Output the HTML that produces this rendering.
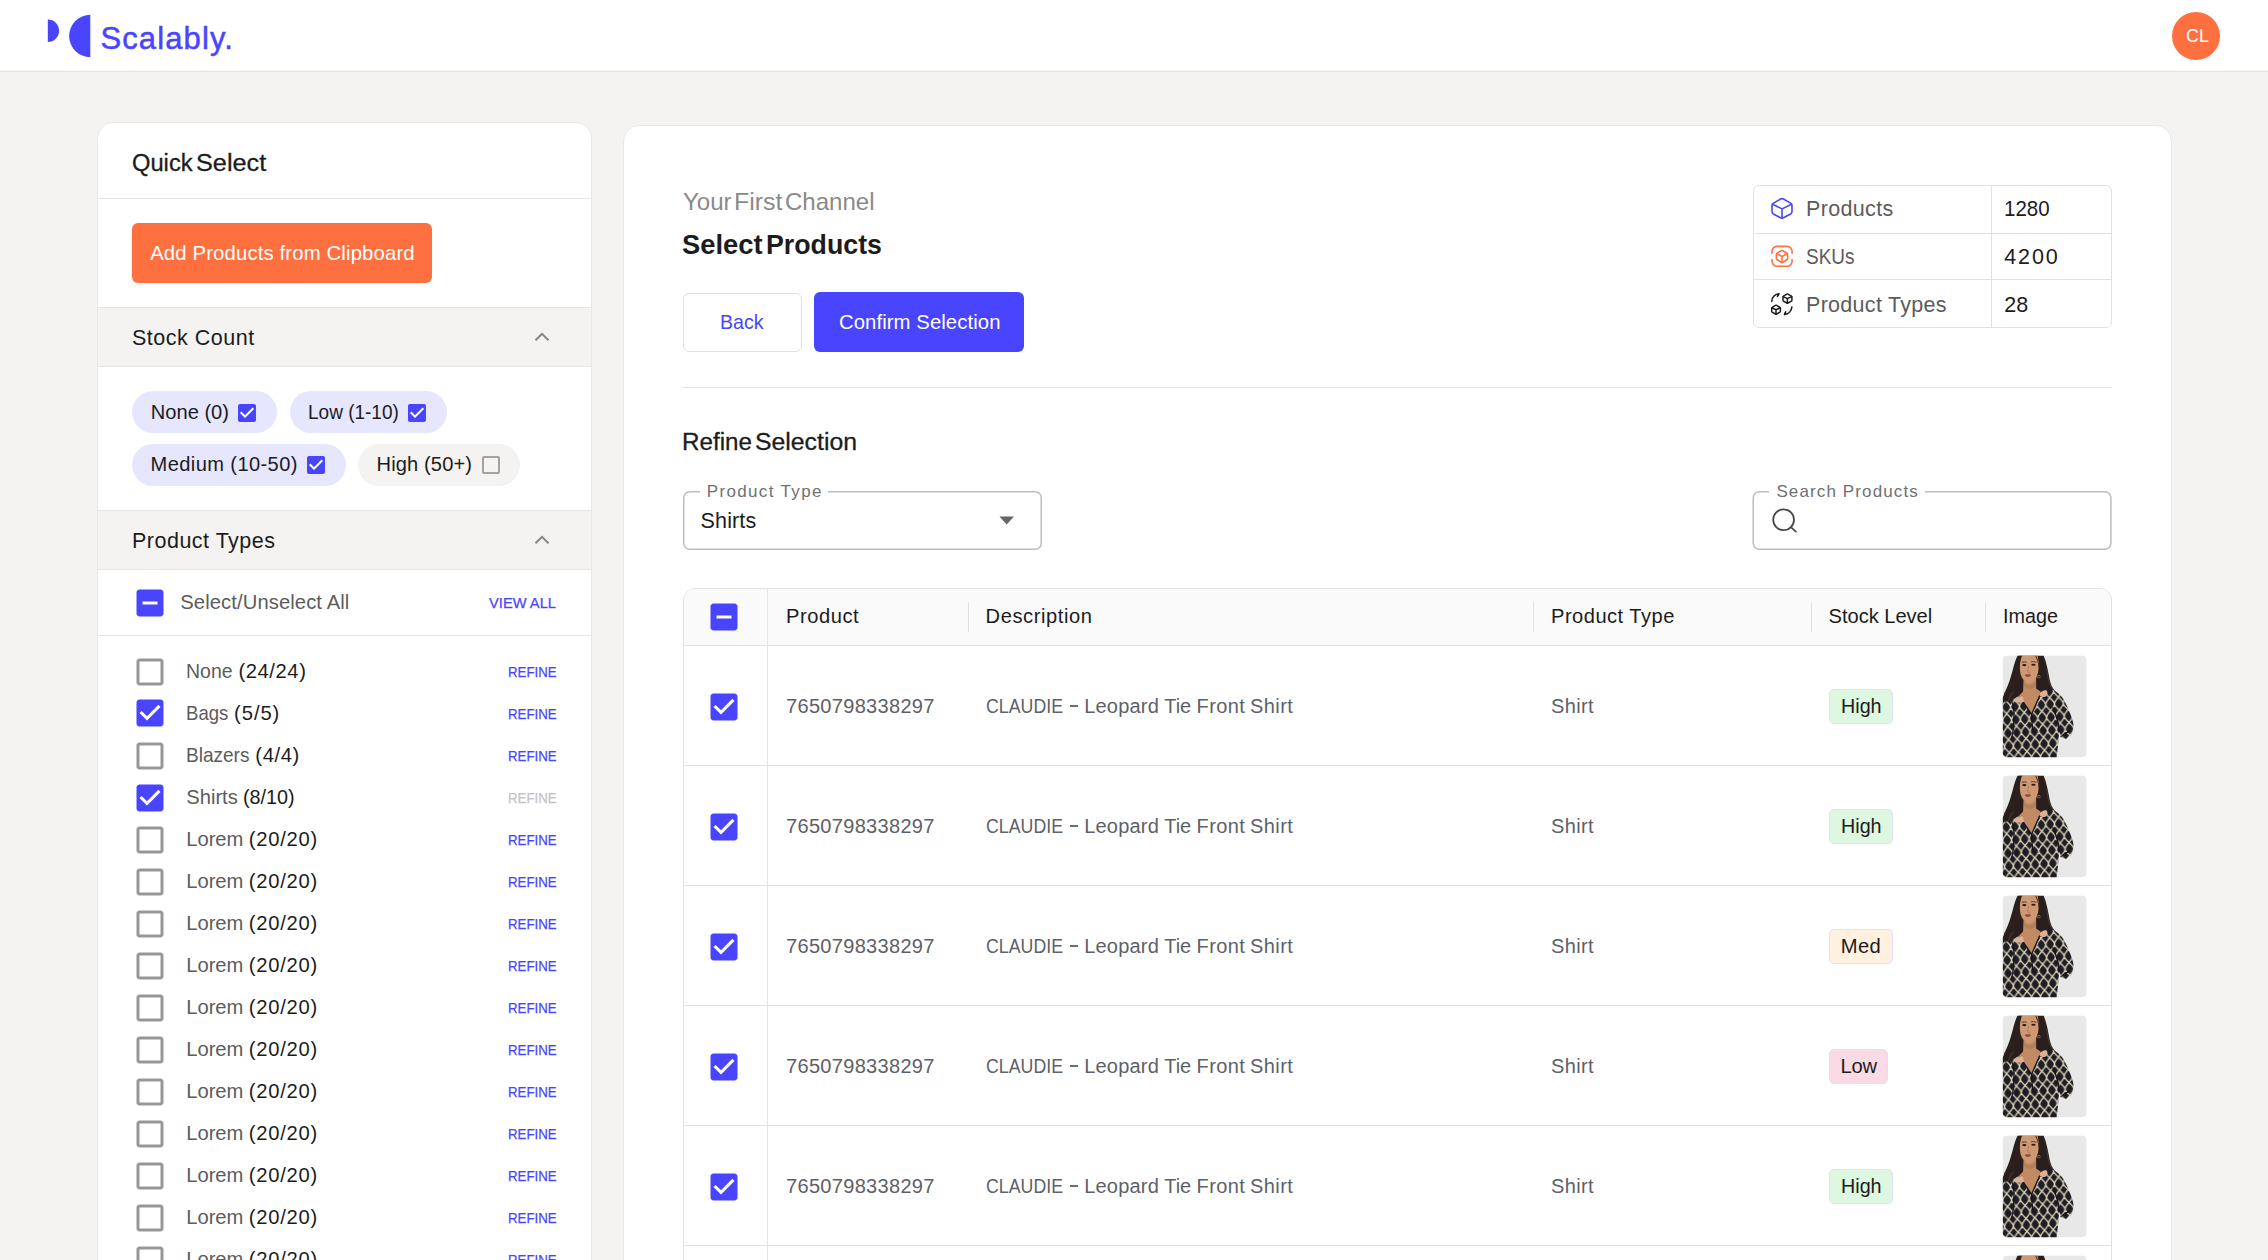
<!DOCTYPE html>
<html><head><meta charset="utf-8"><title>Scalably - Select Products</title>
<style>
html,body{margin:0;padding:0}
body{width:2268px;height:1260px;overflow:hidden;position:relative;background:#F4F3F1;font-family:"Liberation Sans",sans-serif}
.b{position:absolute;box-sizing:border-box;display:block}
.t{position:absolute;white-space:pre;margin:0;padding:0}

</style></head>
<body>
<svg width="0" height="0" style="position:absolute">
<defs>
<pattern id="lat" width="8.8" height="13" patternUnits="userSpaceOnUse" patternTransform="rotate(-4)">
<rect width="8.8" height="13" fill="#1e1d25"/>
<path d="M4.4 0 C4.4 2.6 6.8 4 8.8 6.5 C6.8 9 4.4 10.4 4.4 13 C4.4 10.4 2 9 0 6.5 C2 4 4.4 2.6 4.4 0 Z" fill="none" stroke="#dbd3b6" stroke-width="1.25"/>
</pattern>
<clipPath id="pc"><rect width="84" height="102" rx="4.5"/></clipPath>
<symbol id="prod" viewBox="0 0 84 102">
<g clip-path="url(#pc)">
<rect width="84" height="102" fill="#E8E8E8"/>
<!-- hair mass -->
<path d="M15 0 L41 0 C44 7 45.5 16 47 24 C48.5 30 50 33 53.5 36.5 L47 41 L22 47 L9 47 C6 47 3 50 0 53 L0 42 C1.5 40 1 38 3 35 C6 29 8 22 10 15 C11.5 9 13 4 15 0 Z" fill="#2a1f1c"/>
<path d="M4 36 C6 40 3 44 1 47 M9 24 C8 32 10 38 6 45 M13 12 C11 22 13 30 9 40 M44 14 C45 22 46 28 50 34" stroke="#4e3b32" stroke-width="0.9" fill="none"/>
<!-- neck + chest -->
<path d="M21 22 L20.5 36 L16 40.5 L29 59 L39 37 L33.5 33 L33.5 22 Z" fill="#c28a64"/>
<path d="M21 27 C24 31 30 31 33.5 26 L33.5 31 C30 34 25 34 21 31 Z" fill="#a8744f" opacity="0.55"/>
<!-- face -->
<path d="M18.5 0 C17.5 5 17 10 17.3 15 C17.8 20 20 24.5 24 27.3 C26 28.4 28.4 28.2 30.5 26.5 C33.5 23.8 35.5 19 36 13 C36.2 8 35.8 4 35 0 Z" fill="#cd9872"/>
<path d="M26 11 C25.6 14 25.2 15.5 25 16.6 C25.8 17.3 27 17.3 27.8 16.6" stroke="#a87452" stroke-width="0.7" fill="none"/>
<path d="M22 19.5 C24 18.2 26.6 18.2 28.8 19.5 C26.8 22.4 23.6 22.3 22 19.5 Z" fill="#96524a"/>
<ellipse cx="21.7" cy="9.7" rx="2.1" ry="1.05" fill="#2a1c18"/><ellipse cx="30.8" cy="9.4" rx="2.2" ry="1.05" fill="#2a1c18"/>
<path d="M17.4 10 C17.6 17 19.5 23 24 27.3 C21 26.5 18.6 22 17.6 16 Z" fill="#a9734f" opacity="0.6"/>
<path d="M19.2 7.2 C20.6 6.3 22.6 6.3 24 6.9 M28.4 6.6 C30 5.9 32 6 33.6 7" stroke="#3b2b25" stroke-width="0.8" fill="none"/>
<circle cx="36.2" cy="21.2" r="1.3" fill="none" stroke="#b08a4e" stroke-width="0.7"/>
<!-- hair front strands -->
<path d="M19.5 0 C17 6 16.2 13 17 20 C17.4 24 16 28 13 32 C10 36.5 5 41 2 46 L0 44 C4 36 8 28 10 20 C11.5 12 13 5 16 0 Z" fill="#2a1f1c"/>
<path d="M33.5 0 C36 5 37 12 36.8 19 C36.8 25 39 30 44 34 C46 35.5 48 36 50 37 L46 40 C41 37 37.5 32 36.6 26 C37.4 18 36.6 8 32.5 0 Z" fill="#2a1f1c"/>
<!-- shirt -->
<path d="M0 47 L9 45 L16.5 40.5 L29 59 L38.5 37 L46 33 C52 34.5 57 38 61 44 C65 51 68.5 59 70.5 67 C71.5 72 70.5 77 68 80 L63.5 83.5 L58 81.5 L56.5 76 C56 85 55 94 54 102 L0 102 Z" fill="url(#lat)"/>
<!-- collar + folds -->
<path d="M16.5 40.5 L29 59 L38.5 37 M29 59 L30 76 M56.5 76 C56 68 54 60 50 52 M10 47 C12 56 12 70 9 84" stroke="#121117" stroke-width="1.3" fill="none"/>
<path d="M58 81.5 C61 79 64 76.5 68 75.5" stroke="#121117" stroke-width="1.1" fill="none"/>
<!-- hands at collar -->
<path d="M11.5 44.5 C13 41.5 17 40 20.5 41.5 L21.5 46 C18.5 48 14 48 11.5 44.5 Z" fill="#dcae92"/>
<path d="M36.5 39.5 C37.5 36.5 41 34.2 44.5 35.5 L45 39 C43 42 39.5 42.6 36.5 39.5 Z" fill="#dcae92"/>
</g>
</symbol>
</defs></svg>

<div class='b' style='left:0px;top:0px;width:2268px;height:70px;background:#fff'></div>
<div class='b' style='left:0px;top:70px;width:2268px;height:1px;background:#F6F6F6'></div>
<div class='b' style='left:0px;top:71px;width:2268px;height:1px;background:#E6E6E6'></div>
<svg class='b' style='left:40px;top:8px' width='60' height='56' viewBox='40 8 60 56'>
<path d='M47.8 19.5 A11.3 11.3 0 0 1 47.8 42.1 Z' fill='#4945FF'/>
<path d='M90.3 14.8 A21.2 21.2 0 0 0 90.3 57.2 Z' fill='#4945FF'/></svg>
<div class='t' style='left:100.4px;top:21px;font-size:31px;line-height:35px;color:#4945FF;font-weight:400;letter-spacing:1.137px;-webkit-text-stroke:0.5px #4945FF;'>Scalably.</div>
<div class='b' style='left:2172px;top:12px;width:48px;height:48px;background:#FF7040;border-radius:50%'></div>
<div class='t' style='left:2185.6px;top:25px;font-size:19px;line-height:21px;color:#fff;font-weight:400;transform:scaleX(0.9384);transform-origin:0 0;'>CL</div>
<div class='b' style='left:97px;top:122px;width:495px;height:1200px;background:#fff;border:1px solid #E8E8E8;border-radius:16px 16px 0 0'></div>
<div class='t' style='left:131.6px;top:149px;font-size:24.2px;line-height:27px;color:#1C1C1C;font-weight:400;transform:scaleX(0.9801);transform-origin:0 0;-webkit-text-stroke:0.3px #1C1C1C;'>Quick</div>
<div class='t' style='left:196.2px;top:149px;font-size:24.2px;line-height:27px;color:#1C1C1C;font-weight:400;transform:scaleX(1.0441);transform-origin:0 0;-webkit-text-stroke:0.3px #1C1C1C;'>Select</div>
<div class='b' style='left:98px;top:198px;width:493px;height:1px;background:#E6E6E6'></div>
<div class='b' style='left:132px;top:223px;width:300px;height:60px;background:#FF7040;border-radius:6px'></div>
<div class='t' style='left:150.2px;top:242px;font-size:20.3px;line-height:22px;color:#fff;font-weight:400;letter-spacing:0.154px;'>Add Products from Clipboard</div>
<div class='b' style='left:98px;top:307px;width:493px;height:60px;background:#F4F3F1;border-top:1px solid #E6E6E6;border-bottom:1px solid #E6E6E6'></div>
<div class='t' style='left:132.0px;top:326px;font-size:21.5px;line-height:24px;color:#1C1C1C;font-weight:400;letter-spacing:0.508px;'>Stock Count</div>
<svg class='b' style='left:532.6px;top:331px' width='18' height='12' viewBox='0 0 18 12'><path d='M2.5 9.3 L9 2.8 L15.5 9.3' fill='none' stroke='#858585' stroke-width='2'/></svg>
<div class='b' style='left:132px;top:391px;width:145.2px;height:42px;background:#E6E6FF;border-radius:21px'></div><div class='t' style='left:150.8px;top:401px;font-size:20.1px;line-height:22px;color:#1C1C1C;font-weight:400;letter-spacing:0.002px;'>None (0)</div><svg class='b' style='left:235.40px;top:400.50px' width='24.0' height='24.0' viewBox='0 0 24 24'><rect x='4' y='4' width='16' height='16' fill='#fff'/><path d='M19 3H5c-1.11 0-2 .9-2 2v14c0 1.1.89 2 2 2h14c1.11 0 2-.9 2-2V5c0-1.1-.89-2-2-2zm-9 14l-5-5 1.41-1.41L10 14.17l7.59-7.59L19 8l-9 9z' fill='#4945FF'/></svg>
<div class='b' style='left:289.5px;top:391px;width:157.2px;height:42px;background:#E6E6FF;border-radius:21px'></div><div class='t' style='left:307.6px;top:401px;font-size:20.1px;line-height:22px;color:#1C1C1C;font-weight:400;transform:scaleX(0.9454);transform-origin:0 0;'>Low (1-10)</div><svg class='b' style='left:405.00px;top:400.50px' width='24.0' height='24.0' viewBox='0 0 24 24'><rect x='4' y='4' width='16' height='16' fill='#fff'/><path d='M19 3H5c-1.11 0-2 .9-2 2v14c0 1.1.89 2 2 2h14c1.11 0 2-.9 2-2V5c0-1.1-.89-2-2-2zm-9 14l-5-5 1.41-1.41L10 14.17l7.59-7.59L19 8l-9 9z' fill='#4945FF'/></svg>
<div class='b' style='left:132px;top:444px;width:214.2px;height:42px;background:#E6E6FF;border-radius:21px'></div><div class='t' style='left:150.6px;top:453px;font-size:20.1px;line-height:22px;color:#1C1C1C;font-weight:400;letter-spacing:0.382px;'>Medium (10-50)</div><svg class='b' style='left:304.30px;top:453.20px' width='24.0' height='24.0' viewBox='0 0 24 24'><rect x='4' y='4' width='16' height='16' fill='#fff'/><path d='M19 3H5c-1.11 0-2 .9-2 2v14c0 1.1.89 2 2 2h14c1.11 0 2-.9 2-2V5c0-1.1-.89-2-2-2zm-9 14l-5-5 1.41-1.41L10 14.17l7.59-7.59L19 8l-9 9z' fill='#4945FF'/></svg>
<div class='b' style='left:358px;top:444px;width:162.4px;height:42px;background:#F4F3F1;border-radius:21px'></div><div class='t' style='left:376.6px;top:453px;font-size:20.1px;line-height:22px;color:#1C1C1C;font-weight:400;letter-spacing:0.112px;'>High (50+)</div><svg class='b' style='left:478.60px;top:453.20px' width='24.0' height='24.0' viewBox='0 0 24 24'><path d='M19 5v14H5V5h14m0-2H5c-1.1 0-2 .9-2 2v14c0 1.1.9 2 2 2h14c1.1 0 2-.9 2-2V5c0-1.1-.9-2-2-2z' fill='#A2A2A2'/></svg>
<div class='b' style='left:98px;top:510px;width:493px;height:60px;background:#F4F3F1;border-top:1px solid #E6E6E6;border-bottom:1px solid #E6E6E6'></div>
<div class='t' style='left:132.0px;top:529px;font-size:21.5px;line-height:24px;color:#1C1C1C;font-weight:400;letter-spacing:0.496px;'>Product Types</div>
<svg class='b' style='left:532.6px;top:533.5px' width='18' height='12' viewBox='0 0 18 12'><path d='M2.5 9.3 L9 2.8 L15.5 9.3' fill='none' stroke='#858585' stroke-width='2'/></svg>
<svg class='b' style='left:131.80px;top:584.80px' width='36.0' height='36.0' viewBox='0 0 24 24'><rect x='4' y='4' width='16' height='16' fill='#fff'/><path d='M19 3H5c-1.1 0-2 .9-2 2v14c0 1.1.9 2 2 2h14c1.1 0 2-.9 2-2V5c0-1.1-.9-2-2-2zm-2 10H7v-2h10v2z' fill='#4945FF'/></svg>
<div class='t' style='left:180.3px;top:591px;font-size:20.2px;line-height:22px;color:#5C5C5C;font-weight:400;letter-spacing:0.101px;'>Select/Unselect All</div>
<div class='t' style='left:489.4px;top:594px;font-size:15.4px;line-height:17px;color:#4945FF;font-weight:400;transform:scaleX(0.9550);transform-origin:0 0;-webkit-text-stroke:0.25px currentColor;'>VIEW ALL</div>
<div class='b' style='left:98px;top:635px;width:493px;height:1px;background:#E6E6E6'></div>
<svg class='b' style='left:131.80px;top:653.90px' width='36.0' height='36.0' viewBox='0 0 24 24'><path d='M19 5v14H5V5h14m0-2H5c-1.1 0-2 .9-2 2v14c0 1.1.9 2 2 2h14c1.1 0 2-.9 2-2V5c0-1.1-.9-2-2-2z' fill='#979797'/></svg>
<div class='t' style='left:186.3px;top:660px;font-size:20.2px;line-height:22px;color:#5C5C5C;font-weight:400;transform:scaleX(0.9655);transform-origin:0 0;'>None</div>
<div class='t' style='left:238.4px;top:660px;font-size:20.2px;line-height:22px;color:#1C1C1C;font-weight:400;letter-spacing:0.589px;'>(24/24)</div>
<div class='t' style='left:507.8px;top:663px;font-size:15.4px;line-height:17px;color:#4945FF;font-weight:400;transform:scaleX(0.8611);transform-origin:0 0;-webkit-text-stroke:0.25px currentColor;'>REFINE</div>
<svg class='b' style='left:131.80px;top:694.50px' width='36.0' height='36.0' viewBox='0 0 24 24'><rect x='4' y='4' width='16' height='16' fill='#fff'/><path d='M19 3H5c-1.11 0-2 .9-2 2v14c0 1.1.89 2 2 2h14c1.11 0 2-.9 2-2V5c0-1.1-.89-2-2-2zm-9 14l-5-5 1.41-1.41L10 14.17l7.59-7.59L19 8l-9 9z' fill='#4945FF'/></svg>
<div class='t' style='left:186.3px;top:702px;font-size:20.2px;line-height:22px;color:#5C5C5C;font-weight:400;transform:scaleX(0.9193);transform-origin:0 0;'>Bags</div>
<div class='t' style='left:234.1px;top:702px;font-size:20.2px;line-height:22px;color:#1C1C1C;font-weight:400;letter-spacing:0.921px;'>(5/5)</div>
<div class='t' style='left:507.8px;top:705px;font-size:15.4px;line-height:17px;color:#4945FF;font-weight:400;transform:scaleX(0.8611);transform-origin:0 0;-webkit-text-stroke:0.25px currentColor;'>REFINE</div>
<svg class='b' style='left:131.80px;top:737.90px' width='36.0' height='36.0' viewBox='0 0 24 24'><path d='M19 5v14H5V5h14m0-2H5c-1.1 0-2 .9-2 2v14c0 1.1.9 2 2 2h14c1.1 0 2-.9 2-2V5c0-1.1-.9-2-2-2z' fill='#979797'/></svg>
<div class='t' style='left:186.3px;top:744px;font-size:20.2px;line-height:22px;color:#5C5C5C;font-weight:400;transform:scaleX(0.9431);transform-origin:0 0;'>Blazers</div>
<div class='t' style='left:255.3px;top:744px;font-size:20.2px;line-height:22px;color:#1C1C1C;font-weight:400;letter-spacing:0.621px;'>(4/4)</div>
<div class='t' style='left:507.8px;top:747px;font-size:15.4px;line-height:17px;color:#4945FF;font-weight:400;transform:scaleX(0.8611);transform-origin:0 0;-webkit-text-stroke:0.25px currentColor;'>REFINE</div>
<svg class='b' style='left:131.80px;top:779.90px' width='36.0' height='36.0' viewBox='0 0 24 24'><rect x='4' y='4' width='16' height='16' fill='#fff'/><path d='M19 3H5c-1.11 0-2 .9-2 2v14c0 1.1.89 2 2 2h14c1.11 0 2-.9 2-2V5c0-1.1-.89-2-2-2zm-9 14l-5-5 1.41-1.41L10 14.17l7.59-7.59L19 8l-9 9z' fill='#4945FF'/></svg>
<div class='t' style='left:186.3px;top:786px;font-size:20.2px;line-height:22px;color:#5C5C5C;font-weight:400;letter-spacing:-0.022px;'>Shirts</div>
<div class='t' style='left:243.3px;top:786px;font-size:20.2px;line-height:22px;color:#1C1C1C;font-weight:400;transform:scaleX(0.9801);transform-origin:0 0;'>(8/10)</div>
<div class='t' style='left:507.8px;top:789px;font-size:15.4px;line-height:17px;color:#C4C4C4;font-weight:400;transform:scaleX(0.8611);transform-origin:0 0;-webkit-text-stroke:0.25px currentColor;'>REFINE</div>
<svg class='b' style='left:131.80px;top:821.90px' width='36.0' height='36.0' viewBox='0 0 24 24'><path d='M19 5v14H5V5h14m0-2H5c-1.1 0-2 .9-2 2v14c0 1.1.9 2 2 2h14c1.1 0 2-.9 2-2V5c0-1.1-.9-2-2-2z' fill='#979797'/></svg>
<div class='t' style='left:186.3px;top:828px;font-size:20.2px;line-height:22px;color:#5C5C5C;font-weight:400;letter-spacing:-0.059px;'>Lorem</div>
<div class='t' style='left:248.8px;top:828px;font-size:20.2px;line-height:22px;color:#1C1C1C;font-weight:400;letter-spacing:0.755px;'>(20/20)</div>
<div class='t' style='left:507.8px;top:831px;font-size:15.4px;line-height:17px;color:#4945FF;font-weight:400;transform:scaleX(0.8611);transform-origin:0 0;-webkit-text-stroke:0.25px currentColor;'>REFINE</div>
<svg class='b' style='left:131.80px;top:863.90px' width='36.0' height='36.0' viewBox='0 0 24 24'><path d='M19 5v14H5V5h14m0-2H5c-1.1 0-2 .9-2 2v14c0 1.1.9 2 2 2h14c1.1 0 2-.9 2-2V5c0-1.1-.9-2-2-2z' fill='#979797'/></svg>
<div class='t' style='left:186.3px;top:870px;font-size:20.2px;line-height:22px;color:#5C5C5C;font-weight:400;letter-spacing:-0.059px;'>Lorem</div>
<div class='t' style='left:248.8px;top:870px;font-size:20.2px;line-height:22px;color:#1C1C1C;font-weight:400;letter-spacing:0.755px;'>(20/20)</div>
<div class='t' style='left:507.8px;top:873px;font-size:15.4px;line-height:17px;color:#4945FF;font-weight:400;transform:scaleX(0.8611);transform-origin:0 0;-webkit-text-stroke:0.25px currentColor;'>REFINE</div>
<svg class='b' style='left:131.80px;top:905.90px' width='36.0' height='36.0' viewBox='0 0 24 24'><path d='M19 5v14H5V5h14m0-2H5c-1.1 0-2 .9-2 2v14c0 1.1.9 2 2 2h14c1.1 0 2-.9 2-2V5c0-1.1-.9-2-2-2z' fill='#979797'/></svg>
<div class='t' style='left:186.3px;top:912px;font-size:20.2px;line-height:22px;color:#5C5C5C;font-weight:400;letter-spacing:-0.059px;'>Lorem</div>
<div class='t' style='left:248.8px;top:912px;font-size:20.2px;line-height:22px;color:#1C1C1C;font-weight:400;letter-spacing:0.755px;'>(20/20)</div>
<div class='t' style='left:507.8px;top:915px;font-size:15.4px;line-height:17px;color:#4945FF;font-weight:400;transform:scaleX(0.8611);transform-origin:0 0;-webkit-text-stroke:0.25px currentColor;'>REFINE</div>
<svg class='b' style='left:131.80px;top:947.90px' width='36.0' height='36.0' viewBox='0 0 24 24'><path d='M19 5v14H5V5h14m0-2H5c-1.1 0-2 .9-2 2v14c0 1.1.9 2 2 2h14c1.1 0 2-.9 2-2V5c0-1.1-.9-2-2-2z' fill='#979797'/></svg>
<div class='t' style='left:186.3px;top:954px;font-size:20.2px;line-height:22px;color:#5C5C5C;font-weight:400;letter-spacing:-0.059px;'>Lorem</div>
<div class='t' style='left:248.8px;top:954px;font-size:20.2px;line-height:22px;color:#1C1C1C;font-weight:400;letter-spacing:0.755px;'>(20/20)</div>
<div class='t' style='left:507.8px;top:957px;font-size:15.4px;line-height:17px;color:#4945FF;font-weight:400;transform:scaleX(0.8611);transform-origin:0 0;-webkit-text-stroke:0.25px currentColor;'>REFINE</div>
<svg class='b' style='left:131.80px;top:989.90px' width='36.0' height='36.0' viewBox='0 0 24 24'><path d='M19 5v14H5V5h14m0-2H5c-1.1 0-2 .9-2 2v14c0 1.1.9 2 2 2h14c1.1 0 2-.9 2-2V5c0-1.1-.9-2-2-2z' fill='#979797'/></svg>
<div class='t' style='left:186.3px;top:996px;font-size:20.2px;line-height:22px;color:#5C5C5C;font-weight:400;letter-spacing:-0.059px;'>Lorem</div>
<div class='t' style='left:248.8px;top:996px;font-size:20.2px;line-height:22px;color:#1C1C1C;font-weight:400;letter-spacing:0.755px;'>(20/20)</div>
<div class='t' style='left:507.8px;top:999px;font-size:15.4px;line-height:17px;color:#4945FF;font-weight:400;transform:scaleX(0.8611);transform-origin:0 0;-webkit-text-stroke:0.25px currentColor;'>REFINE</div>
<svg class='b' style='left:131.80px;top:1031.90px' width='36.0' height='36.0' viewBox='0 0 24 24'><path d='M19 5v14H5V5h14m0-2H5c-1.1 0-2 .9-2 2v14c0 1.1.9 2 2 2h14c1.1 0 2-.9 2-2V5c0-1.1-.9-2-2-2z' fill='#979797'/></svg>
<div class='t' style='left:186.3px;top:1038px;font-size:20.2px;line-height:22px;color:#5C5C5C;font-weight:400;letter-spacing:-0.059px;'>Lorem</div>
<div class='t' style='left:248.8px;top:1038px;font-size:20.2px;line-height:22px;color:#1C1C1C;font-weight:400;letter-spacing:0.755px;'>(20/20)</div>
<div class='t' style='left:507.8px;top:1041px;font-size:15.4px;line-height:17px;color:#4945FF;font-weight:400;transform:scaleX(0.8611);transform-origin:0 0;-webkit-text-stroke:0.25px currentColor;'>REFINE</div>
<svg class='b' style='left:131.80px;top:1073.90px' width='36.0' height='36.0' viewBox='0 0 24 24'><path d='M19 5v14H5V5h14m0-2H5c-1.1 0-2 .9-2 2v14c0 1.1.9 2 2 2h14c1.1 0 2-.9 2-2V5c0-1.1-.9-2-2-2z' fill='#979797'/></svg>
<div class='t' style='left:186.3px;top:1080px;font-size:20.2px;line-height:22px;color:#5C5C5C;font-weight:400;letter-spacing:-0.059px;'>Lorem</div>
<div class='t' style='left:248.8px;top:1080px;font-size:20.2px;line-height:22px;color:#1C1C1C;font-weight:400;letter-spacing:0.755px;'>(20/20)</div>
<div class='t' style='left:507.8px;top:1083px;font-size:15.4px;line-height:17px;color:#4945FF;font-weight:400;transform:scaleX(0.8611);transform-origin:0 0;-webkit-text-stroke:0.25px currentColor;'>REFINE</div>
<svg class='b' style='left:131.80px;top:1115.90px' width='36.0' height='36.0' viewBox='0 0 24 24'><path d='M19 5v14H5V5h14m0-2H5c-1.1 0-2 .9-2 2v14c0 1.1.9 2 2 2h14c1.1 0 2-.9 2-2V5c0-1.1-.9-2-2-2z' fill='#979797'/></svg>
<div class='t' style='left:186.3px;top:1122px;font-size:20.2px;line-height:22px;color:#5C5C5C;font-weight:400;letter-spacing:-0.059px;'>Lorem</div>
<div class='t' style='left:248.8px;top:1122px;font-size:20.2px;line-height:22px;color:#1C1C1C;font-weight:400;letter-spacing:0.755px;'>(20/20)</div>
<div class='t' style='left:507.8px;top:1125px;font-size:15.4px;line-height:17px;color:#4945FF;font-weight:400;transform:scaleX(0.8611);transform-origin:0 0;-webkit-text-stroke:0.25px currentColor;'>REFINE</div>
<svg class='b' style='left:131.80px;top:1157.90px' width='36.0' height='36.0' viewBox='0 0 24 24'><path d='M19 5v14H5V5h14m0-2H5c-1.1 0-2 .9-2 2v14c0 1.1.9 2 2 2h14c1.1 0 2-.9 2-2V5c0-1.1-.9-2-2-2z' fill='#979797'/></svg>
<div class='t' style='left:186.3px;top:1164px;font-size:20.2px;line-height:22px;color:#5C5C5C;font-weight:400;letter-spacing:-0.059px;'>Lorem</div>
<div class='t' style='left:248.8px;top:1164px;font-size:20.2px;line-height:22px;color:#1C1C1C;font-weight:400;letter-spacing:0.755px;'>(20/20)</div>
<div class='t' style='left:507.8px;top:1167px;font-size:15.4px;line-height:17px;color:#4945FF;font-weight:400;transform:scaleX(0.8611);transform-origin:0 0;-webkit-text-stroke:0.25px currentColor;'>REFINE</div>
<svg class='b' style='left:131.80px;top:1199.90px' width='36.0' height='36.0' viewBox='0 0 24 24'><path d='M19 5v14H5V5h14m0-2H5c-1.1 0-2 .9-2 2v14c0 1.1.9 2 2 2h14c1.1 0 2-.9 2-2V5c0-1.1-.9-2-2-2z' fill='#979797'/></svg>
<div class='t' style='left:186.3px;top:1206px;font-size:20.2px;line-height:22px;color:#5C5C5C;font-weight:400;letter-spacing:-0.059px;'>Lorem</div>
<div class='t' style='left:248.8px;top:1206px;font-size:20.2px;line-height:22px;color:#1C1C1C;font-weight:400;letter-spacing:0.755px;'>(20/20)</div>
<div class='t' style='left:507.8px;top:1209px;font-size:15.4px;line-height:17px;color:#4945FF;font-weight:400;transform:scaleX(0.8611);transform-origin:0 0;-webkit-text-stroke:0.25px currentColor;'>REFINE</div>
<svg class='b' style='left:131.80px;top:1241.90px' width='36.0' height='36.0' viewBox='0 0 24 24'><path d='M19 5v14H5V5h14m0-2H5c-1.1 0-2 .9-2 2v14c0 1.1.9 2 2 2h14c1.1 0 2-.9 2-2V5c0-1.1-.9-2-2-2z' fill='#979797'/></svg>
<div class='t' style='left:186.3px;top:1248px;font-size:20.2px;line-height:22px;color:#5C5C5C;font-weight:400;letter-spacing:-0.059px;'>Lorem</div>
<div class='t' style='left:248.8px;top:1248px;font-size:20.2px;line-height:22px;color:#1C1C1C;font-weight:400;letter-spacing:0.755px;'>(20/20)</div>
<div class='t' style='left:507.8px;top:1251px;font-size:15.4px;line-height:17px;color:#4945FF;font-weight:400;transform:scaleX(0.8611);transform-origin:0 0;-webkit-text-stroke:0.25px currentColor;'>REFINE</div>
<svg class='b' style='left:131.80px;top:1283.90px' width='36.0' height='36.0' viewBox='0 0 24 24'><path d='M19 5v14H5V5h14m0-2H5c-1.1 0-2 .9-2 2v14c0 1.1.9 2 2 2h14c1.1 0 2-.9 2-2V5c0-1.1-.9-2-2-2z' fill='#979797'/></svg>
<div class='t' style='left:186.3px;top:1290px;font-size:20.2px;line-height:22px;color:#5C5C5C;font-weight:400;letter-spacing:-0.059px;'>Lorem</div>
<div class='t' style='left:248.8px;top:1290px;font-size:20.2px;line-height:22px;color:#1C1C1C;font-weight:400;letter-spacing:0.755px;'>(20/20)</div>
<div class='t' style='left:507.8px;top:1293px;font-size:15.4px;line-height:17px;color:#4945FF;font-weight:400;transform:scaleX(0.8611);transform-origin:0 0;-webkit-text-stroke:0.25px currentColor;'>REFINE</div>
<div class='b' style='left:623px;top:125px;width:1549px;height:1200px;background:#fff;border:1px solid #E8E8E8;border-radius:16px 16px 0 0'></div>
<div class='t' style='left:682.8px;top:188px;font-size:24.2px;line-height:27px;color:#8A8A8A;font-weight:400;transform:scaleX(0.9944);transform-origin:0 0;'>Your</div>
<div class='t' style='left:733.9px;top:188px;font-size:24.2px;line-height:27px;color:#8A8A8A;font-weight:400;transform:scaleX(1.0291);transform-origin:0 0;'>First</div>
<div class='t' style='left:785.3px;top:188px;font-size:24.2px;line-height:27px;color:#8A8A8A;font-weight:400;transform:scaleX(0.9943);transform-origin:0 0;'>Channel</div>
<div class='t' style='left:682.4px;top:230px;font-size:27px;line-height:30px;color:#1C1C1C;font-weight:700;transform:scaleX(1.0130);transform-origin:0 0;'>Select</div>
<div class='t' style='left:766.4px;top:230px;font-size:27px;line-height:30px;color:#1C1C1C;font-weight:700;transform:scaleX(0.9912);transform-origin:0 0;'>Products</div>
<div class='b' style='left:683px;top:293px;width:119px;height:59px;background:#fff;border:1px solid #E2E2E2;border-radius:6px'></div>
<div class='t' style='left:720.3px;top:311px;font-size:20.3px;line-height:22px;color:#4945FF;font-weight:400;transform:scaleX(0.9669);transform-origin:0 0;'>Back</div>
<div class='b' style='left:814px;top:292px;width:210px;height:60px;background:#4945FF;border-radius:6px'></div>
<div class='t' style='left:839.0px;top:311px;font-size:20.3px;line-height:22px;color:#fff;font-weight:400;letter-spacing:0.084px;'>Confirm Selection</div>
<div class='b' style='left:683px;top:387px;width:1429px;height:1px;background:#E4E4E4'></div>
<div class='b' style='left:1752.5px;top:185px;width:359.5px;height:143px;background:#fff;border:1px solid #E2E2E2;border-radius:6px'></div>
<div class='b' style='left:1753px;top:233px;width:358px;height:1px;background:#E2E2E2'></div>
<div class='b' style='left:1753px;top:279px;width:358px;height:1px;background:#E2E2E2'></div>
<div class='b' style='left:1991px;top:186px;width:1px;height:141px;background:#E2E2E2'></div>
<div class='t' style='left:1806.0px;top:197px;font-size:21.5px;line-height:24px;color:#5C5C5C;font-weight:400;letter-spacing:0.334px;'>Products</div>
<div class='t' style='left:1806.0px;top:245px;font-size:21.5px;line-height:24px;color:#5C5C5C;font-weight:400;transform:scaleX(0.8823);transform-origin:0 0;'>SKUs</div>
<div class='t' style='left:1806.0px;top:293px;font-size:21.5px;line-height:24px;color:#5C5C5C;font-weight:400;letter-spacing:0.296px;'>Product Types</div>
<div class='t' style='left:2004.2px;top:197px;font-size:21.5px;line-height:24px;color:#1C1C1C;font-weight:400;transform:scaleX(0.9531);transform-origin:0 0;'>1280</div>
<div class='t' style='left:2004.2px;top:245px;font-size:21.5px;line-height:24px;color:#1C1C1C;font-weight:400;letter-spacing:1.919px;'>4200</div>
<div class='t' style='left:2004.2px;top:293px;font-size:21.5px;line-height:24px;color:#1C1C1C;font-weight:400;letter-spacing:0.078px;'>28</div>
<svg class='b' style='left:1769px;top:196px' width='26' height='26' viewBox='0 0 26 26' fill='none' stroke='#4945FF' stroke-width='1.6' stroke-linejoin='round' stroke-linecap='round'>
<path d='M11.6 3 Q13 2.2 14.4 3 L21.6 7.1 Q23 7.9 23 9.5 L23 15.6 Q23 17.2 21.6 18 L14.4 21.8 Q13 22.5 11.6 21.8 L4.4 18 Q3 17.2 3 15.6 L3 9.5 Q3 7.9 4.4 7.1 Z'/>
<path d='M3.5 8.2 L13 12.9 L22.5 8.2 M13 12.9 V22.2'/></svg>
<svg class='b' style='left:1769px;top:243px' width='26' height='26' viewBox='0 0 26 26' fill='none' stroke='#FF7040' stroke-width='1.6' stroke-linejoin='round' stroke-linecap='butt'>
<path d='M3 10.7 V8.4 a5 5 0 0 1 5 -5 h10.1 a5 5 0 0 1 5 5 v2.3 M23.1 15.9 V18.3 a5 5 0 0 1 -5 5 h-10.1 a5 5 0 0 1 -5 -5 v-2.4'/>
<path d='M12.2 7.7 Q13 7.3 13.8 7.7 L17.9 10.1 Q18.6 10.6 18.6 11.4 L18.6 15.5 Q18.6 16.3 17.9 16.7 L13.8 19.2 Q13 19.6 12.2 19.2 L8.1 16.7 Q7.4 16.3 7.4 15.5 L7.4 11.4 Q7.4 10.6 8.1 10.1 Z'/>
<path d='M7.7 10.7 L13 13.5 L18.3 10.7 M13 13.5 V19.4'/></svg>
<svg class='b' style='left:1769px;top:291px' width='26' height='26' viewBox='0 0 26 26' fill='none' stroke='#1C1C1C' stroke-width='1.5' stroke-linejoin='round' stroke-linecap='round'>
<path d='M17.8 3.2 Q18.4 2.9 19 3.2 L22.4 5.1 Q22.9 5.4 22.9 6 L22.9 9.3 Q22.9 9.9 22.4 10.2 L19 12 Q18.4 12.3 17.8 12 L14.5 10.2 Q14 9.9 14 9.3 L14 6 Q14 5.4 14.5 5.1 Z'/>
<path d='M14.2 5.6 L18.4 7.6 L22.7 5.6 M18.4 7.6 V12.1'/>
<path d='M6.4 14.3 Q7 14 7.6 14.3 L10.9 16.3 Q11.4 16.6 11.4 17.2 L11.4 20.3 Q11.4 20.9 10.9 21.2 L7.6 23 Q7 23.3 6.4 23 L3.2 21.2 Q2.7 20.9 2.7 20.3 L2.7 17.2 Q2.7 16.6 3.2 16.3 Z'/>
<path d='M2.9 16.8 L7 18.7 L11.2 16.8 M7 18.7 V23.1'/>
<path d='M2.7 10.4 A8.6 8.6 0 0 1 9.8 2.8 L8.4 5.5'/>
<path d='M22.9 15.9 A8.6 8.6 0 0 1 15.6 23.6 L16.7 20.8'/>
<path d='M9.9 2.7 L8.2 3.3 L9.2 4.4 Z M15.5 23.7 L17.2 23 L16.2 21.9 Z' fill='#1C1C1C' stroke-width='0.8'/></svg>
<div class='t' style='left:681.9px;top:428px;font-size:24.2px;line-height:27px;color:#1C1C1C;font-weight:400;transform:scaleX(1.0011);transform-origin:0 0;-webkit-text-stroke:0.3px #1C1C1C;'>Refine</div>
<div class='t' style='left:755.2px;top:428px;font-size:24.2px;line-height:27px;color:#1C1C1C;font-weight:400;transform:scaleX(1.0250);transform-origin:0 0;-webkit-text-stroke:0.3px #1C1C1C;'>Selection</div>
<svg class='b' style='left:682px;top:490px' width='362' height='61' viewBox='0 0 362 61'><rect x='1.75' y='1.75' width='357.5' height='57.5' rx='6' fill='#fff' stroke='#BDBDBD' stroke-width='1.5'/></svg><div class='b' style='left:699.8px;top:489px;width:128.6px;height:5px;background:#fff'></div><div class='t' style='left:706.8px;top:482px;font-size:17px;line-height:19px;color:#707070;font-weight:400;letter-spacing:1.340px;'>Product Type</div>
<div class='t' style='left:700.6px;top:509px;font-size:21.5px;line-height:24px;color:#1C1C1C;font-weight:400;letter-spacing:0.126px;'>Shirts</div>
<svg class='b' style='left:998px;top:515px' width='18' height='12' viewBox='0 0 18 12'><path d='M1.4 1.6 H16 L8.7 9.4 Z' fill='#666'/></svg>
<svg class='b' style='left:1751px;top:490px' width='362.2' height='61' viewBox='0 0 362.2 61'><rect x='2.25' y='1.75' width='357.7' height='57.5' rx='6' fill='#fff' stroke='#BDBDBD' stroke-width='1.5'/></svg><div class='b' style='left:1769.4px;top:489px;width:155.4px;height:5px;background:#fff'></div><div class='t' style='left:1776.4px;top:482px;font-size:17px;line-height:19px;color:#707070;font-weight:400;letter-spacing:1.122px;'>Search Products</div>
<svg class='b' style='left:1770px;top:506px' width='30' height='30' viewBox='0 0 30 30' fill='none' stroke='#4A4A4A' stroke-width='1.8' stroke-linecap='round'><circle cx='13.6' cy='13.8' r='10.4'/><path d='M21.2 21.4 L25.8 25.6'/></svg>
<div class='b' style='left:683px;top:587.5px;width:1429px;height:760px;background:#fff;border:1px solid #E2E2E2;border-radius:12px 12px 0 0;overflow:hidden'></div>
<div class='b' style='left:684px;top:588.5px;width:1427px;height:57px;background:#FAFAFA;border-radius:11px 11px 0 0'></div>
<div class='b' style='left:684px;top:645px;width:1427px;height:1px;background:#E2E2E2'></div>
<div class='b' style='left:767px;top:588.5px;width:1px;height:700px;background:#E6E6E6'></div>
<div class='b' style='left:968px;top:601.5px;width:1px;height:30px;background:#E0E0E0'></div>
<div class='b' style='left:1533px;top:601.5px;width:1px;height:30px;background:#E0E0E0'></div>
<div class='b' style='left:1811px;top:601.5px;width:1px;height:30px;background:#E0E0E0'></div>
<div class='b' style='left:1985px;top:601.5px;width:1px;height:30px;background:#E0E0E0'></div>
<svg class='b' style='left:706.40px;top:598.50px' width='36.0' height='36.0' viewBox='0 0 24 24'><rect x='4' y='4' width='16' height='16' fill='#fff'/><path d='M19 3H5c-1.1 0-2 .9-2 2v14c0 1.1.9 2 2 2h14c1.1 0 2-.9 2-2V5c0-1.1-.9-2-2-2zm-2 10H7v-2h10v2z' fill='#4945FF'/></svg>
<div class='t' style='left:786.0px;top:605px;font-size:20.1px;line-height:22px;color:#1C1C1C;font-weight:400;letter-spacing:0.558px;'>Product</div>
<div class='t' style='left:985.6px;top:605px;font-size:20.1px;line-height:22px;color:#1C1C1C;font-weight:400;letter-spacing:0.578px;'>Description</div>
<div class='t' style='left:1551.0px;top:605px;font-size:20.1px;line-height:22px;color:#1C1C1C;font-weight:400;letter-spacing:0.488px;'>Product Type</div>
<div class='t' style='left:1828.6px;top:605px;font-size:20.1px;line-height:22px;color:#1C1C1C;font-weight:400;letter-spacing:-0.028px;'>Stock Level</div>
<div class='t' style='left:2002.6px;top:605px;font-size:20.1px;line-height:22px;color:#1C1C1C;font-weight:400;transform:scaleX(0.9846);transform-origin:0 0;'>Image</div>
<svg class='b' style='left:706.40px;top:688.80px' width='36.0' height='36.0' viewBox='0 0 24 24'><rect x='4' y='4' width='16' height='16' fill='#fff'/><path d='M19 3H5c-1.11 0-2 .9-2 2v14c0 1.1.89 2 2 2h14c1.11 0 2-.9 2-2V5c0-1.1-.89-2-2-2zm-9 14l-5-5 1.41-1.41L10 14.17l7.59-7.59L19 8l-9 9z' fill='#4945FF'/></svg>
<div class='t' style='left:786.0px;top:695px;font-size:20px;line-height:22px;color:#5E6168;font-weight:400;letter-spacing:0.316px;'>7650798338297</div>
<div class='t' style='left:985.6px;top:695px;font-size:20px;line-height:22px;color:#5E6168;font-weight:400;transform:scaleX(0.8881);transform-origin:0 0;'>CLAUDIE</div>
<div class='b' style='left:1070px;top:705.3px;width:8.2px;height:1.7px;background:#6a6d73'></div>
<div class='t' style='left:1084.2px;top:695px;font-size:20px;line-height:22px;color:#5E6168;font-weight:400;letter-spacing:0.199px;'>Leopard</div>
<div class='t' style='left:1164.3px;top:695px;font-size:20px;line-height:22px;color:#5E6168;font-weight:400;letter-spacing:-0.123px;'>Tie</div>
<div class='t' style='left:1196.6px;top:695px;font-size:20px;line-height:22px;color:#5E6168;font-weight:400;letter-spacing:0.378px;'>Front</div>
<div class='t' style='left:1250.0px;top:695px;font-size:20px;line-height:22px;color:#5E6168;font-weight:400;letter-spacing:0.419px;'>Shirt</div>
<div class='t' style='left:1551.0px;top:695px;font-size:20px;line-height:22px;color:#5E6168;font-weight:400;letter-spacing:0.369px;'>Shirt</div>
<div class='b' style='left:1829px;top:689.3px;width:63.6px;height:34.6px;background:#DDF7E1;border:1px solid #E2E0F2;border-radius:5px'></div>
<div class='t' style='left:1840.5px;top:695px;font-size:20.2px;line-height:22px;color:#1C1C1C;font-weight:400;transform:scaleX(0.9776);transform-origin:0 0;'>High</div>
<svg class='b' style='left:2002px;top:655px' width='86' height='104' viewBox='0 0 86 104'><use href='#prod' x='0.6' y='0.20' width='84' height='102.4'/></svg>
<div class='b' style='left:684px;top:765.0px;width:1427px;height:1px;background:#E2E2E2'></div>
<svg class='b' style='left:706.40px;top:808.80px' width='36.0' height='36.0' viewBox='0 0 24 24'><rect x='4' y='4' width='16' height='16' fill='#fff'/><path d='M19 3H5c-1.11 0-2 .9-2 2v14c0 1.1.89 2 2 2h14c1.11 0 2-.9 2-2V5c0-1.1-.89-2-2-2zm-9 14l-5-5 1.41-1.41L10 14.17l7.59-7.59L19 8l-9 9z' fill='#4945FF'/></svg>
<div class='t' style='left:786.0px;top:815px;font-size:20px;line-height:22px;color:#5E6168;font-weight:400;letter-spacing:0.316px;'>7650798338297</div>
<div class='t' style='left:985.6px;top:815px;font-size:20px;line-height:22px;color:#5E6168;font-weight:400;transform:scaleX(0.8881);transform-origin:0 0;'>CLAUDIE</div>
<div class='b' style='left:1070px;top:825.3px;width:8.2px;height:1.7px;background:#6a6d73'></div>
<div class='t' style='left:1084.2px;top:815px;font-size:20px;line-height:22px;color:#5E6168;font-weight:400;letter-spacing:0.199px;'>Leopard</div>
<div class='t' style='left:1164.3px;top:815px;font-size:20px;line-height:22px;color:#5E6168;font-weight:400;letter-spacing:-0.123px;'>Tie</div>
<div class='t' style='left:1196.6px;top:815px;font-size:20px;line-height:22px;color:#5E6168;font-weight:400;letter-spacing:0.378px;'>Front</div>
<div class='t' style='left:1250.0px;top:815px;font-size:20px;line-height:22px;color:#5E6168;font-weight:400;letter-spacing:0.419px;'>Shirt</div>
<div class='t' style='left:1551.0px;top:815px;font-size:20px;line-height:22px;color:#5E6168;font-weight:400;letter-spacing:0.369px;'>Shirt</div>
<div class='b' style='left:1829px;top:809.3px;width:63.6px;height:34.6px;background:#DDF7E1;border:1px solid #E2E0F2;border-radius:5px'></div>
<div class='t' style='left:1840.5px;top:815px;font-size:20.2px;line-height:22px;color:#1C1C1C;font-weight:400;transform:scaleX(0.9776);transform-origin:0 0;'>High</div>
<svg class='b' style='left:2002px;top:775px' width='86' height='104' viewBox='0 0 86 104'><use href='#prod' x='0.6' y='0.20' width='84' height='102.4'/></svg>
<div class='b' style='left:684px;top:885.0px;width:1427px;height:1px;background:#E2E2E2'></div>
<svg class='b' style='left:706.40px;top:928.80px' width='36.0' height='36.0' viewBox='0 0 24 24'><rect x='4' y='4' width='16' height='16' fill='#fff'/><path d='M19 3H5c-1.11 0-2 .9-2 2v14c0 1.1.89 2 2 2h14c1.11 0 2-.9 2-2V5c0-1.1-.89-2-2-2zm-9 14l-5-5 1.41-1.41L10 14.17l7.59-7.59L19 8l-9 9z' fill='#4945FF'/></svg>
<div class='t' style='left:786.0px;top:935px;font-size:20px;line-height:22px;color:#5E6168;font-weight:400;letter-spacing:0.316px;'>7650798338297</div>
<div class='t' style='left:985.6px;top:935px;font-size:20px;line-height:22px;color:#5E6168;font-weight:400;transform:scaleX(0.8881);transform-origin:0 0;'>CLAUDIE</div>
<div class='b' style='left:1070px;top:945.3px;width:8.2px;height:1.7px;background:#6a6d73'></div>
<div class='t' style='left:1084.2px;top:935px;font-size:20px;line-height:22px;color:#5E6168;font-weight:400;letter-spacing:0.199px;'>Leopard</div>
<div class='t' style='left:1164.3px;top:935px;font-size:20px;line-height:22px;color:#5E6168;font-weight:400;letter-spacing:-0.123px;'>Tie</div>
<div class='t' style='left:1196.6px;top:935px;font-size:20px;line-height:22px;color:#5E6168;font-weight:400;letter-spacing:0.378px;'>Front</div>
<div class='t' style='left:1250.0px;top:935px;font-size:20px;line-height:22px;color:#5E6168;font-weight:400;letter-spacing:0.419px;'>Shirt</div>
<div class='t' style='left:1551.0px;top:935px;font-size:20px;line-height:22px;color:#5E6168;font-weight:400;letter-spacing:0.369px;'>Shirt</div>
<div class='b' style='left:1829px;top:929.3px;width:63.6px;height:34.6px;background:#FFF0DF;border:1px solid #E2E0F2;border-radius:5px'></div>
<div class='t' style='left:1840.8px;top:935px;font-size:20.2px;line-height:22px;color:#1C1C1C;font-weight:400;letter-spacing:0.359px;'>Med</div>
<svg class='b' style='left:2002px;top:895px' width='86' height='104' viewBox='0 0 86 104'><use href='#prod' x='0.6' y='0.20' width='84' height='102.4'/></svg>
<div class='b' style='left:684px;top:1005.0px;width:1427px;height:1px;background:#E2E2E2'></div>
<svg class='b' style='left:706.40px;top:1048.80px' width='36.0' height='36.0' viewBox='0 0 24 24'><rect x='4' y='4' width='16' height='16' fill='#fff'/><path d='M19 3H5c-1.11 0-2 .9-2 2v14c0 1.1.89 2 2 2h14c1.11 0 2-.9 2-2V5c0-1.1-.89-2-2-2zm-9 14l-5-5 1.41-1.41L10 14.17l7.59-7.59L19 8l-9 9z' fill='#4945FF'/></svg>
<div class='t' style='left:786.0px;top:1055px;font-size:20px;line-height:22px;color:#5E6168;font-weight:400;letter-spacing:0.316px;'>7650798338297</div>
<div class='t' style='left:985.6px;top:1055px;font-size:20px;line-height:22px;color:#5E6168;font-weight:400;transform:scaleX(0.8881);transform-origin:0 0;'>CLAUDIE</div>
<div class='b' style='left:1070px;top:1065.3px;width:8.2px;height:1.7px;background:#6a6d73'></div>
<div class='t' style='left:1084.2px;top:1055px;font-size:20px;line-height:22px;color:#5E6168;font-weight:400;letter-spacing:0.199px;'>Leopard</div>
<div class='t' style='left:1164.3px;top:1055px;font-size:20px;line-height:22px;color:#5E6168;font-weight:400;letter-spacing:-0.123px;'>Tie</div>
<div class='t' style='left:1196.6px;top:1055px;font-size:20px;line-height:22px;color:#5E6168;font-weight:400;letter-spacing:0.378px;'>Front</div>
<div class='t' style='left:1250.0px;top:1055px;font-size:20px;line-height:22px;color:#5E6168;font-weight:400;letter-spacing:0.419px;'>Shirt</div>
<div class='t' style='left:1551.0px;top:1055px;font-size:20px;line-height:22px;color:#5E6168;font-weight:400;letter-spacing:0.369px;'>Shirt</div>
<div class='b' style='left:1829px;top:1049.3px;width:59.4px;height:34.6px;background:#FADBE5;border:1px solid #E2E0F2;border-radius:5px'></div>
<div class='t' style='left:1840.4px;top:1055px;font-size:20.2px;line-height:22px;color:#1C1C1C;font-weight:400;letter-spacing:-0.223px;'>Low</div>
<svg class='b' style='left:2002px;top:1015px' width='86' height='104' viewBox='0 0 86 104'><use href='#prod' x='0.6' y='0.20' width='84' height='102.4'/></svg>
<div class='b' style='left:684px;top:1125.0px;width:1427px;height:1px;background:#E2E2E2'></div>
<svg class='b' style='left:706.40px;top:1168.80px' width='36.0' height='36.0' viewBox='0 0 24 24'><rect x='4' y='4' width='16' height='16' fill='#fff'/><path d='M19 3H5c-1.11 0-2 .9-2 2v14c0 1.1.89 2 2 2h14c1.11 0 2-.9 2-2V5c0-1.1-.89-2-2-2zm-9 14l-5-5 1.41-1.41L10 14.17l7.59-7.59L19 8l-9 9z' fill='#4945FF'/></svg>
<div class='t' style='left:786.0px;top:1175px;font-size:20px;line-height:22px;color:#5E6168;font-weight:400;letter-spacing:0.316px;'>7650798338297</div>
<div class='t' style='left:985.6px;top:1175px;font-size:20px;line-height:22px;color:#5E6168;font-weight:400;transform:scaleX(0.8881);transform-origin:0 0;'>CLAUDIE</div>
<div class='b' style='left:1070px;top:1185.3px;width:8.2px;height:1.7px;background:#6a6d73'></div>
<div class='t' style='left:1084.2px;top:1175px;font-size:20px;line-height:22px;color:#5E6168;font-weight:400;letter-spacing:0.199px;'>Leopard</div>
<div class='t' style='left:1164.3px;top:1175px;font-size:20px;line-height:22px;color:#5E6168;font-weight:400;letter-spacing:-0.123px;'>Tie</div>
<div class='t' style='left:1196.6px;top:1175px;font-size:20px;line-height:22px;color:#5E6168;font-weight:400;letter-spacing:0.378px;'>Front</div>
<div class='t' style='left:1250.0px;top:1175px;font-size:20px;line-height:22px;color:#5E6168;font-weight:400;letter-spacing:0.419px;'>Shirt</div>
<div class='t' style='left:1551.0px;top:1175px;font-size:20px;line-height:22px;color:#5E6168;font-weight:400;letter-spacing:0.369px;'>Shirt</div>
<div class='b' style='left:1829px;top:1169.3px;width:63.6px;height:34.6px;background:#DDF7E1;border:1px solid #E2E0F2;border-radius:5px'></div>
<div class='t' style='left:1840.5px;top:1175px;font-size:20.2px;line-height:22px;color:#1C1C1C;font-weight:400;transform:scaleX(0.9776);transform-origin:0 0;'>High</div>
<svg class='b' style='left:2002px;top:1135px' width='86' height='104' viewBox='0 0 86 104'><use href='#prod' x='0.6' y='0.20' width='84' height='102.4'/></svg>
<div class='b' style='left:684px;top:1245.0px;width:1427px;height:1px;background:#E2E2E2'></div>
<svg class='b' style='left:706.40px;top:1288.80px' width='36.0' height='36.0' viewBox='0 0 24 24'><rect x='4' y='4' width='16' height='16' fill='#fff'/><path d='M19 3H5c-1.11 0-2 .9-2 2v14c0 1.1.89 2 2 2h14c1.11 0 2-.9 2-2V5c0-1.1-.89-2-2-2zm-9 14l-5-5 1.41-1.41L10 14.17l7.59-7.59L19 8l-9 9z' fill='#4945FF'/></svg>
<div class='t' style='left:786.0px;top:1295px;font-size:20px;line-height:22px;color:#5E6168;font-weight:400;letter-spacing:0.316px;'>7650798338297</div>
<div class='t' style='left:985.6px;top:1295px;font-size:20px;line-height:22px;color:#5E6168;font-weight:400;transform:scaleX(0.8881);transform-origin:0 0;'>CLAUDIE</div>
<div class='b' style='left:1070px;top:1305.3px;width:8.2px;height:1.7px;background:#6a6d73'></div>
<div class='t' style='left:1084.2px;top:1295px;font-size:20px;line-height:22px;color:#5E6168;font-weight:400;letter-spacing:0.199px;'>Leopard</div>
<div class='t' style='left:1164.3px;top:1295px;font-size:20px;line-height:22px;color:#5E6168;font-weight:400;letter-spacing:-0.123px;'>Tie</div>
<div class='t' style='left:1196.6px;top:1295px;font-size:20px;line-height:22px;color:#5E6168;font-weight:400;letter-spacing:0.378px;'>Front</div>
<div class='t' style='left:1250.0px;top:1295px;font-size:20px;line-height:22px;color:#5E6168;font-weight:400;letter-spacing:0.419px;'>Shirt</div>
<div class='t' style='left:1551.0px;top:1295px;font-size:20px;line-height:22px;color:#5E6168;font-weight:400;letter-spacing:0.369px;'>Shirt</div>
<div class='b' style='left:1829px;top:1289.3px;width:63.6px;height:34.6px;background:#DDF7E1;border:1px solid #E2E0F2;border-radius:5px'></div>
<div class='t' style='left:1840.5px;top:1295px;font-size:20.2px;line-height:22px;color:#1C1C1C;font-weight:400;transform:scaleX(0.9776);transform-origin:0 0;'>High</div>
<svg class='b' style='left:2002px;top:1255px' width='86' height='104' viewBox='0 0 86 104'><use href='#prod' x='0.6' y='0.20' width='84' height='102.4'/></svg>
</body></html>
